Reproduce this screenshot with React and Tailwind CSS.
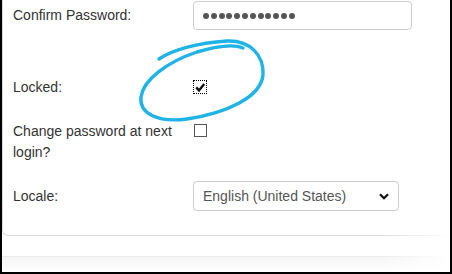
import React from 'react';

const font = { fontFamily: '"Liberation Sans", Arial, sans-serif' };

function Row({ label, children, className = '' }) {
  return (
    <div className={`flex ${className}`}>
      <div className="w-[180px] shrink-0 text-[14px] leading-[21px] text-[#333]">{label}</div>
      <div className="flex">{children}</div>
    </div>
  );
}

export default function App() {
  return (
    <div
      className="relative w-[452px] h-[274px] overflow-hidden bg-white border-x-2 border-b-2 border-black"
      style={font}
    >
      {/* card */}
      <div className="border-l border-b border-[#dcdcdc] rounded-bl-[6px] pl-[10px] pt-[1px] pb-[24px]">
        <Row label="Confirm Password:" className="items-center h-[29px]">
          <div className="w-[219px] h-[29px] border border-[#cccccc] rounded-[4px] flex items-center gap-[1.8px] pl-[9px]">
            {Array.from({ length: 12 }).map((_, i) => (
              <span key={i} className="w-[6px] h-[6px] rounded-full bg-[#555]" />
            ))}
          </div>
        </Row>

        <Row label={<span className="block pt-[2px]">Locked:</span>} className="items-center h-[29px] mt-[42px]">
          <span className="w-[14px] h-[14px] border border-dotted border-black bg-white flex items-center justify-center">
            <svg width="12" height="12" viewBox="0 0 12 12" fill="none">
              <path d="M2.2 6.4 L5 9.4 L10.2 3" stroke="#111" strokeWidth="2.4" />
            </svg>
          </span>
        </Row>

        <Row label={<span className="block w-[165px]">Change password at next login?</span>} className="mt-[20px]">
          <span className="mt-[3px] ml-[1px] w-[13px] h-[13px] border border-[#555] bg-white" />
        </Row>

        <Row label="Locale:" className="items-center h-[30px] mt-[18px]">
          <div className="relative">
            <select
              defaultValue="en-US"
              className="appearance-none w-[206px] h-[30px] border border-[#cccccc] rounded-[4px] bg-white pl-[9px] text-[14px] text-[#555] outline-none"
              style={font}
            >
              <option value="en-US">English (United States)</option>
            </select>
            <svg className="absolute right-[10px] top-[12px] pointer-events-none" width="10" height="7" viewBox="0 0 10 7" fill="none">
              <path d="M1 1.2 L5 5.2 L9 1.2" stroke="#111" strokeWidth="2.2" />
            </svg>
          </div>
        </Row>
      </div>

      {/* page footer band */}
      <div className="mt-[20px] h-[16px] border-t border-[#ececec] bg-gradient-to-b from-[#f5f5f5] to-white" />

      {/* right fade */}
      <div className="absolute right-0 bottom-0 w-[70px] h-[50px] bg-gradient-to-r from-transparent to-white pointer-events-none" />

      {/* hand-drawn annotation */}
      <svg className="absolute left-0 top-0 pointer-events-none" width="452" height="274" fill="none">
        <path
          d="M157,59 C170,50 195,43 225,41 C248,40 262,55 261,75 C259,97 225,113 185,119 C155,123 137,113 139,97 C141,80 165,62 195,52 C215,46 232,44 241,48"
          stroke="#1fb3e6"
          strokeWidth="3.4"
          strokeLinecap="round"
        />
      </svg>
    </div>
  );
}
